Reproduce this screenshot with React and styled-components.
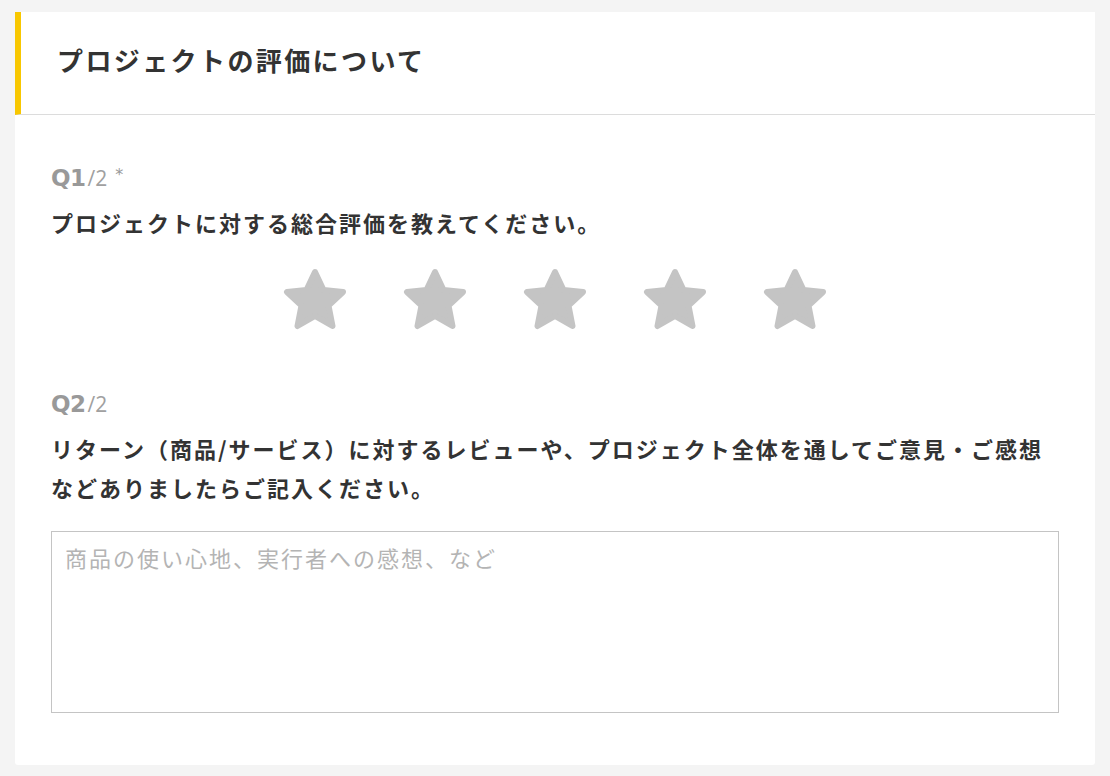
import React from "react";
import styled, { createGlobalStyle } from "styled-components";

const Global = createGlobalStyle`
  html, body {
    margin: 0;
    padding: 0;
    background: #f4f4f4;
    font-family: "Noto Sans CJK JP", sans-serif;
    color: #333;
  }
`;

const Page = styled.div`
  padding: 12px 15px;
`;

const Card = styled.section`
  background: #fff;
  border-radius: 0 0 3px 3px;
  padding-bottom: 52px;
`;

const Header = styled.header`
  height: 103px;
  display: flex;
  align-items: center;
  border-left: 6px solid #f8c700;
  border-bottom: 1px solid #dcdcdc;
  padding: 0 0 7px 36px;
  box-sizing: border-box;
`;

const Title = styled.h1`
  margin: 0;
  font-size: 26px;
  font-weight: 700;
  letter-spacing: 2.4px;
  color: #333;
`;

const Body = styled.div`
  padding: 48px 36px 0 36px;
`;

const Question = styled.div`
  margin-bottom: ${(p) => p.gap || 0}px;
`;

const Num = styled.div`
  color: #999;
  display: flex;
  align-items: baseline;
  height: 30px;
  line-height: 30px;
  margin-bottom: 10px;
  font-family: "DejaVu Sans", "Noto Sans CJK JP", sans-serif;
`;

const NumMain = styled.span`
  font-size: 23px;
  font-weight: 700;
  letter-spacing: -0.5px;
`;

const NumTotal = styled.span`
  font-size: 21px;
  margin-left: 2px;
  font-family: "Open Sans", sans-serif;
  color: #a0a0a0;
`;

const Required = styled.span`
  font-size: 16px;
  margin-left: 8px;
  position: relative;
  top: -6px;
`;

const Text = styled.p`
  margin: 0;
  font-size: 22px;
  font-weight: 700;
  line-height: 39px;
  letter-spacing: 2px;
  color: #333;
`;

const Stars = styled.div`
  display: flex;
  justify-content: center;
  gap: 54px;
  margin-top: 26px;
`;

const StarButton = styled.button`
  border: none;
  background: none;
  padding: 0;
  width: 66px;
  height: 62px;
  cursor: pointer;
  display: block;
`;

const TextArea = styled.textarea`
  display: block;
  width: 100%;
  box-sizing: border-box;
  height: 182px;
  margin-top: 24px;
  border: 1px solid #c4c4c4;
  border-radius: 0;
  padding: 9px 13px;
  font-family: "Noto Sans CJK JP", sans-serif;
  font-size: 22px;
  letter-spacing: 2px;
  line-height: 32px;
  color: #333;
  resize: none;
  outline: none;
  &::placeholder {
    color: #b4b4b4;
  }
`;

const Star = () => (
  <svg width="66" height="62" viewBox="0 0 66 62">
    <polygon
      points="33,4 41.5,22 61,24 46.5,37.5 50.5,58 33,48 15.5,58 19.5,37.5 5,24 24.5,22"
      fill="#c4c4c4"
      stroke="#c4c4c4"
      strokeWidth="6"
      strokeLinejoin="round"
    />
  </svg>
);

export default function App() {
  return (
    <Page>
      <Global />
      <Card>
        <Header>
          <Title>プロジェクトの評価について</Title>
        </Header>
        <Body>
          <Question gap={59}>
            <Num>
              <NumMain>Q1</NumMain>
              <NumTotal>/2</NumTotal>
              <Required>*</Required>
            </Num>
            <Text>プロジェクトに対する総合評価を教えてください。</Text>
            <Stars>
              {[1, 2, 3, 4, 5].map((n) => (
                <StarButton key={n} aria-label={`${n}`}>
                  <Star />
                </StarButton>
              ))}
            </Stars>
          </Question>
          <Question>
            <Num>
              <NumMain>Q2</NumMain>
              <NumTotal>/2</NumTotal>
            </Num>
            <Text>
              リターン（商品/サービス）に対するレビューや、プロジェクト全体を通してご意見・ご感想などありましたらご記入ください。
            </Text>
            <TextArea placeholder="商品の使い心地、実行者への感想、など" />
          </Question>
        </Body>
      </Card>
    </Page>
  );
}
